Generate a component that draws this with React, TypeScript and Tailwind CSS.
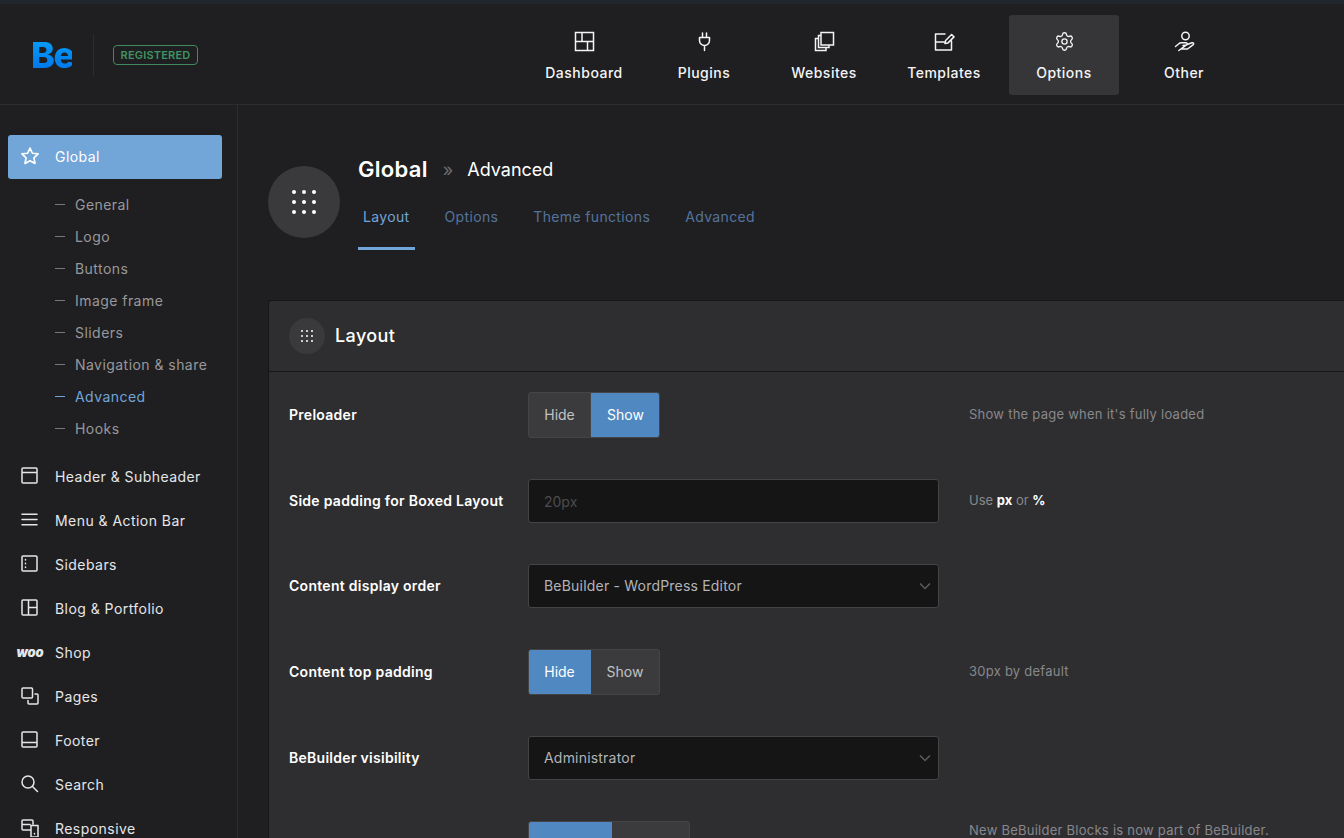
import { Settings } from "lucide-react";

const font = "[font-family:Inter,'Liberation_Sans',sans-serif]";

const Ic = ({ children, size = 20, box = 20 }: { children: React.ReactNode; size?: number; box?: number }) => (
  <svg width={size} height={size} viewBox={`0 0 ${box} ${box}`} fill="none" stroke="currentColor" strokeWidth="1.5" strokeLinecap="round" strokeLinejoin="round">
    {children}
  </svg>
);

const navItems = [
  { label: "Dashboard", active: false, icon: <path d="M1.500 1.500h18v18h-18zM1.500 10.500h18M8 1.500v9M13.500 10.500v9" strokeLinejoin="miter" /> },
  { label: "Plugins", active: false, icon: <path d="M8.500 2v4.500M12.500 2v4.500M5.500 6.500h10v3a5 5 0 0 1-10 0zM10.500 14.500v5" /> },
  { label: "Websites", active: false, icon: <path d="M7 1.500h12.500v12.500H7zM7 4.500H4.500v12H15V14M4.500 7.500H1.500v12H12v-3" strokeLinejoin="miter" /> },
  { label: "Templates", active: false, icon: <path d="M11 3H1.500v16h16v-9M1.500 11h8.500M11 12.500l.6-3 6-6 2.400 2.400-6 6z" /> },
  { label: "Options", active: true, icon: null },
  { label: "Other", active: false, icon: <><circle cx="11.500" cy="5" r="3.700" /><path d="M1.500 15.500l3-2.500c1-1 2-1.200 3-1.200h4.500c1.500 0 1.800 2 0 2.300l-3 .4M12.500 13.800l5.500-2c1.500-.5 2.300 1 1 2.100l-5.500 4.100H7l-2.200 1.500z" /></> },
];

const subItems = ["General", "Logo", "Buttons", "Image frame", "Sliders", "Navigation & share", "Advanced", "Hooks"];

const sideItems = [
  { label: "Header & Subheader", icon: <path d="M2 1h13a1 1 0 0 1 1 1v13a1 1 0 0 1-1 1H2a1 1 0 0 1-1-1V2a1 1 0 0 1 1-1zM1 5.500h15" /> },
  { label: "Menu & Action Bar", icon: <path d="M1 3.200h15M1 8.500h15M1 13.800h15" /> },
  { label: "Sidebars", icon: <path d="M2 1h13a1 1 0 0 1 1 1v13a1 1 0 0 1-1 1H2a1 1 0 0 1-1-1V2a1 1 0 0 1 1-1zM4.500 4.500v.5M4.500 8.200v.5M4.500 12v.5" /> },
  { label: "Blog & Portfolio", icon: <path d="M2 1h13a1 1 0 0 1 1 1v13a1 1 0 0 1-1 1H2a1 1 0 0 1-1-1V2a1 1 0 0 1 1-1zM7.500 1v15M7.500 8.500H16" /> },
  { label: "Shop", icon: null },
  { label: "Pages", icon: <path d="M2 1h8.500a1 1 0 0 1 1 1v8a1 1 0 0 1-1 1H2a1 1 0 0 1-1-1V2a1 1 0 0 1 1-1zM14 7h2a1 1 0 0 1 1 1v8a1 1 0 0 1-1 1H8a1 1 0 0 1-1-1v-2.500" /> },
  { label: "Footer", icon: <path d="M2 1h13a1 1 0 0 1 1 1v13a1 1 0 0 1-1 1H2a1 1 0 0 1-1-1V2a1 1 0 0 1 1-1zM1 11.500h15" /> },
  { label: "Search", icon: <><circle cx="7" cy="7" r="6" /><path d="M11.500 11.500l5 5" /></> },
  { label: "Responsive", icon: <path d="M12 5V2a1 1 0 0 0-1-1H2a1 1 0 0 0-1 1v8a1 1 0 0 0 1 1h7M1 5.500h8M10 6.500h7V18h-7zM13.500 14.500v.5" /> },
];

const Dots = ({ dot, gap }: { dot: string; gap: string }) => (
  <div className={`grid grid-cols-3 ${gap}`}>
    {Array.from({ length: 9 }).map((_, i) => (
      <span key={i} className={`${dot} rounded-full bg-white`} />
    ))}
  </div>
);

const Toggle = ({ left, right, on, leftW, rightW }: { left: string; right: string; on: "left" | "right"; leftW: string; rightW: string }) => (
  <div className="flex h-[46px] w-fit overflow-hidden rounded-[3px] border border-[#454547] bg-[#3b3b3d] text-[14px]">
    <span className={`flex items-center justify-center pb-[2px] ${leftW} ${on === "left" ? "-my-px -ml-px bg-[#5088c1] text-white" : "border-r border-[#454547] text-[#c2c2c4]"}`}>{left}</span>
    <span className={`flex items-center justify-center pb-[2px] ${rightW} ${on === "right" ? "-my-px -mr-px bg-[#5088c1] text-white" : "text-[#c2c2c4]"}`}>{right}</span>
  </div>
);

const Select = ({ value }: { value: string }) => (
  <div className="flex h-[44px] w-[411px] items-center justify-between rounded-[3px] border border-[#444446] bg-[#151515] pl-[15px] pr-[7px] text-[14px] tracking-[0.2px] text-[#b4b4b8]">
    <span className="pb-[2px]">{value}</span>
    <svg width="12" height="8" viewBox="0 0 12 8" fill="none" stroke="#5c5c5e" strokeWidth="1.500"><path d="M1 1.500l5 5 5-5" /></svg>
  </div>
);

const Row = ({ label, children, note, noteTop }: { label: string; children: React.ReactNode; note?: React.ReactNode; noteTop?: boolean }) => (
  <div className="flex items-center">
    <div className="w-[239px] shrink-0 pb-[2px] text-[14px] font-semibold tracking-[0.28px] text-white">{label}</div>
    <div className="w-[441px] shrink-0">{children}</div>
    {note && <div className={`text-[13px] tracking-[0.25px] text-[#88888c] ${noteTop ? "self-start" : ""}`}>{note}</div>}
  </div>
);

export default function App() {
  return (
    <div className={`${font} flex h-[838px] w-[1344px] flex-col overflow-hidden bg-[#1f1f21] text-white`}>
      <div className="h-1 shrink-0 bg-[#20272c]" />
      <header className="flex h-[101px] shrink-0 items-center border-b border-[#2c2c2e]">
        <div className="flex w-[529px] items-center pt-[2px] pl-8">
          <span className="w-[41px] -translate-x-px bg-gradient-to-b from-[#0ea0f8] to-[#0073ea] bg-clip-text text-[36px] leading-none font-extrabold tracking-[-1.500px] text-transparent">Be</span>
          <span className="mr-[19px] ml-5 h-[42px] w-px bg-[#2c2c2e]" />
          <span className="flex h-5 w-[85px] items-center justify-center rounded-[4px] border border-[#3f8a5e] text-[11px] font-semibold tracking-[0.2px] text-[#3f9463]">REGISTERED</span>
        </div>
        <nav className="flex gap-[10px] self-start pt-[11px]">
          {navItems.map((n) => (
            <a key={n.label} className={`flex h-[80px] w-[110px] flex-col items-center rounded-[3px] pt-[16px] text-[14px] font-[450] tracking-[0.5px] text-[#f4f4f6] ${n.active ? "bg-[#363638]" : ""}`}>
              {n.icon ? <Ic size={21} box={21}>{n.icon}</Ic> : <Settings size={21} strokeWidth={1.5} />}
              <span className="mt-[10px]">{n.label}</span>
            </a>
          ))}
        </nav>
      </header>

      <div className="flex min-h-0 flex-1">
        <aside className="w-[238px] shrink-0 border-r border-[#2c2c2e] pt-[30px] pl-2 tracking-[0.45px]">
          <div className="flex h-[44px] w-[214px] items-center rounded-[3px] bg-[#72a5d8] pb-[2px] pl-[12px] text-[14px] text-white">
            <svg width="20" height="20" viewBox="0 0 24 24" fill="none" stroke="white" strokeWidth="2" strokeLinejoin="round"><path d="M12 2.500l2.900 6.200 6.800.8-5 4.700 1.300 6.800-6-3.400-6 3.400 1.300-6.800-5-4.700 6.800-.8z" /></svg>
            <span className="ml-[15px]">Global</span>
          </div>
          <ul className="mt-[9px] pb-[10px]">
            {subItems.map((s) => (
              <li key={s} className={`flex h-8 items-center pl-[47px] text-[14px] ${s === "Advanced" ? "text-[#72a5d8]" : "text-[#98989c]"}`}>
                <span className={`mr-[10px] h-px w-[10px] ${s === "Advanced" ? "bg-[#72a5d8]" : "bg-[#77777b]"}`} />
                {s}
              </li>
            ))}
          </ul>
          {sideItems.map((s) => (
            <div key={s.label} className="flex h-[44px] items-center text-[14px] text-[#e6e6e8]">
              <span className="flex w-[47px] justify-center pr-[3px]">
                {s.icon ? (
                  <Ic size={18} box={18}>{s.icon}</Ic>
                ) : (
                  <span className="w-[32px] text-center text-[13px] leading-none font-black tracking-[-0.200px] italic">woo</span>
                )}
              </span>
              {s.label}
            </div>
          ))}
        </aside>

        <main className="min-w-0 flex-1 pl-[30px]">
          <div className="flex h-[195px] pt-[61px]">
            <div className="flex h-[72px] w-[72px] items-center justify-center rounded-full bg-[#3a3a3c]">
              <Dots dot="h-[4px] w-[4px]" gap="gap-x-[6px] gap-y-[6px]" />
            </div>
            <div className="ml-[18px] -mt-[13px]">
              <div className="flex items-center">
                <span className="text-[22px] font-semibold tracking-[0.3px]">Global</span>
                <span className="ml-[15px] text-[18px] text-[#6d6d70]">»</span>
                <span className="ml-[14px] text-[18px]">Advanced</span>
              </div>
              <div className="mt-[18px] flex gap-[25px] text-[14px] tracking-[0.35px] text-[#55749c]">
                <span className="h-[46px] border-b-[3px] border-[#72a5d8] px-[5px] pt-[2px] text-[#72a5d8]">Layout</span>
                <span className="px-[5px] pt-[2px]">Options</span>
                <span className="px-[5px] pt-[2px]">Theme functions</span>
                <span className="px-[5px] pt-[2px]">Advanced</span>
              </div>
            </div>
          </div>

          <section className="min-h-[600px] rounded-tl-[3px] border-t border-l border-[#161617] bg-[#2e2e30]">
            <div className="flex h-[71px] items-center border-b border-[#161617] pl-5">
              <div className="flex h-9 w-9 items-center justify-center rounded-full bg-[#3a3a3c]">
                <Dots dot="h-[2px] w-[2px]" gap="gap-x-[3px] gap-y-[3px]" />
              </div>
              <h2 className="ml-[10px] pb-[1px] text-[18px] font-medium tracking-[0.4px]">Layout</h2>
            </div>
            <div className="flex flex-col gap-[41px] pt-5 pl-5">
              <Row label="Preloader" note="Show the page when it's fully loaded">
                <Toggle left="Hide" right="Show" on="right" leftW="w-[62px]" rightW="w-[69px]" />
              </Row>
              <Row label="Side padding for Boxed Layout" note={<span className="tracking-normal">Use <b className="text-white">px</b> or <b className="text-white">%</b></span>}>
                <div className="flex h-[44px] w-[411px] items-center rounded-[3px] border border-[#444446] bg-[#151515] pl-[15px] text-[14px] text-[#4c4c4e]">20px</div>
              </Row>
              <Row label="Content display order">
                <Select value="BeBuilder - WordPress Editor" />
              </Row>
              <Row label="Content top padding" note="30px by default">
                <Toggle left="Hide" right="Show" on="left" leftW="w-[63px]" rightW="w-[68px]" />
              </Row>
              <Row label="BeBuilder visibility">
                <Select value="Administrator" />
              </Row>
              <Row label="BeBuilder Blocks" note="New BeBuilder Blocks is now part of BeBuilder." noteTop>
                <Toggle left="Disable" right="Enable" on="left" leftW="w-[84px]" rightW="w-[77px]" />
              </Row>
            </div>
          </section>
        </main>
      </div>
    </div>
  );
}
